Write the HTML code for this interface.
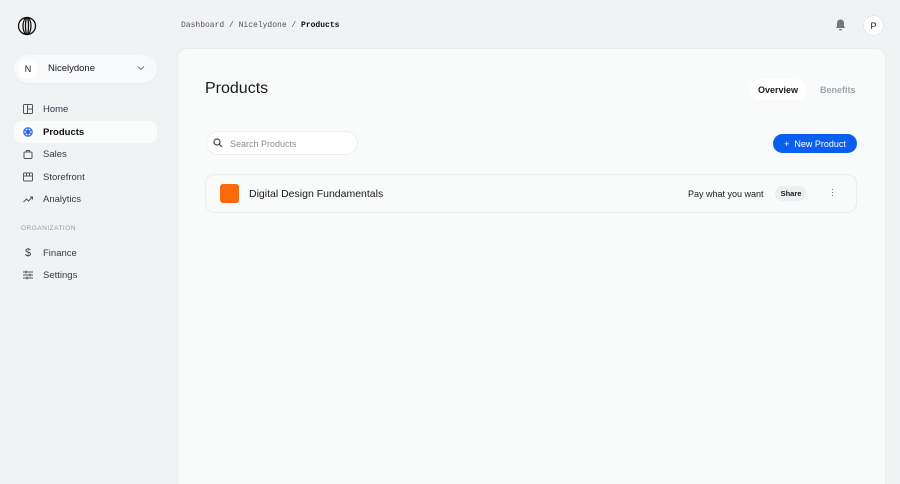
<!DOCTYPE html>
<html style="overflow:hidden;height:484px"><head><style>
*{margin:0;padding:0;box-sizing:border-box}
body{width:900px;height:484px;overflow:hidden;background:#f1f2f4;font-family:"Liberation Sans",sans-serif;position:relative;color:#1a1a1f}
.a{position:absolute}
.nav{left:14px;width:143px;height:22px;border-radius:8px;font-size:9.5px;color:#363946;display:flex;align-items:center;padding-left:9px}
.nav svg{margin-right:10px}
.nav.act{background:#fafbfb;color:#111;font-weight:bold}
</style></head><body>
<svg class="a" style="left:17px;top:16px" width="20" height="20" viewBox="0 0 20 20" fill="none" stroke="#111" stroke-width="1.3"><circle cx="10" cy="10" r="8.5"/><ellipse cx="10" cy="10" rx="4" ry="8.5"/><ellipse cx="10" cy="10" rx="1.5" ry="8.5"/></svg>
<div class="a" style="left:14px;top:55px;width:143px;height:28px;border-radius:14px;background:#f8f9fa;box-shadow:0 1px 2px rgba(0,0,0,.04)"></div>
<div class="a" style="left:18px;top:59px;width:20px;height:20px;border-radius:50%;background:#fff;font-size:9px;display:flex;align-items:center;justify-content:center">N</div>
<div class="a" style="left:48px;top:63px;font-size:9.5px">Nicelydone</div>
<svg class="a" style="left:137px;top:65px" width="8" height="6" viewBox="0 0 8 6" fill="none" stroke="#777" stroke-width="1"><path d="M1 1.5l3 3 3-3"/></svg>
<div class="a nav" style="top:98px"><svg width="10" height="10" viewBox="0 0 10 10" fill="none" stroke="#555" stroke-width="1"><rect x=".5" y=".5" width="9" height="9" rx="1"/><path d="M4.5 .5v9M4.5 5h5"/></svg>Home</div>
<div class="a nav act" style="top:121px"><svg width="10" height="10" viewBox="0 0 10 10" fill="none" stroke="#2563eb" stroke-width="1.2"><circle cx="5" cy="5" r="4.2"/><circle cx="5" cy="5" r="1.5"/><path d="M5 1v8M1.5 3l7 4M1.5 7l7-4"/></svg>Products</div>
<div class="a nav" style="top:143px"><svg width="10" height="10" viewBox="0 0 10 10" fill="none" stroke="#555" stroke-width="1"><rect x="1" y="3" width="8" height="6.5" rx="1"/><path d="M3.5 3V1.5h3V3"/></svg>Sales</div>
<div class="a nav" style="top:166px"><svg width="10" height="10" viewBox="0 0 10 10" fill="none" stroke="#555" stroke-width="1"><rect x=".5" y="1" width="9" height="8" rx="1"/><path d="M.5 4h9M3.5 1v3M6.5 1v3"/></svg>Storefront</div>
<div class="a nav" style="top:188px"><svg width="10" height="10" viewBox="0 0 10 10" fill="none" stroke="#555" stroke-width="1"><path d="M.5 8l3-3 2 2 4-4M7 3h2.5v2.5"/></svg>Analytics</div>
<div class="a" style="left:21px;top:225px;font-size:6.5px;color:#999;letter-spacing:.5px">ORGANIZATION</div>
<div class="a nav" style="top:242px"><span style="width:10px;margin-right:10px;font-size:11px;color:#444;text-align:center">$</span>Finance</div>
<div class="a nav" style="top:264px"><svg width="10" height="10" viewBox="0 0 10 10" fill="none" stroke="#555" stroke-width="1"><path d="M0 2h10M0 5h10M0 8h10M3 .5v3M7 3.5v3M4 6.5v3"/></svg>Settings</div>
<div class="a" style="left:181px;top:21px;font-family:'Liberation Mono',monospace;font-size:8px;color:#555">Dashboard / Nicelydone / <b style="color:#111">Products</b></div>
<svg class="a" style="left:835px;top:19px" width="11" height="12" viewBox="0 0 11 12" fill="#777"><path d="M5.5 .5c-2 0-3.5 1.5-3.5 3.5v3L1 9h9L9 7V4C9 2 7.5.5 5.5.5zM4 10a1.5 1.5 0 003 0z"/></svg>
<div class="a" style="left:863px;top:15px;width:21px;height:21px;border-radius:50%;background:#fff;border:1px solid #e6e7ea;font-size:9px;display:flex;align-items:center;justify-content:center">P</div>
<div class="a" style="left:177px;top:48px;width:709px;height:450px;border-radius:10px;background:#f9fafa;border:1px solid #ebecef"></div>
<div class="a" style="left:205px;top:80px;font-size:16px">Products</div>
<div class="a" style="left:750px;top:79px;width:56px;height:21px;border-radius:11px;background:#fff;font-size:9px;font-weight:bold;display:flex;align-items:center;justify-content:center">Overview</div>
<div class="a" style="left:820px;top:85px;font-size:9px;font-weight:bold;color:#a0a3ad">Benefits</div>
<div class="a" style="left:206px;top:131px;width:152px;height:24px;border-radius:12px;background:#fff;border:1px solid #eceef0"></div>
<svg class="a" style="left:213px;top:138px" width="10" height="10" viewBox="0 0 10 10" fill="none" stroke="#444" stroke-width="1.2"><circle cx="4" cy="4" r="3"/><path d="M6.3 6.3L9 9"/></svg>
<div class="a" style="left:230px;top:139px;font-size:9px;color:#8a8d96">Search Products</div>
<div class="a" style="left:773px;top:134px;width:84px;height:19px;border-radius:10px;background:#0b5ff0;color:#fff;font-size:9px;display:flex;align-items:center;justify-content:center">+&nbsp;&nbsp;New Product</div>
<div class="a" style="left:205px;top:174px;width:652px;height:39px;border-radius:10px;background:#f9fafa;border:1px solid #ebecef"></div>
<div class="a" style="left:220px;top:184px;width:19px;height:19px;border-radius:3px;background:#fa6a0a"></div>
<div class="a" style="left:249px;top:188px;font-size:10.5px">Digital Design Fundamentals</div>
<div class="a" style="left:688px;top:189px;font-size:9px">Pay what you want</div>
<div class="a" style="left:775px;top:186px;width:32px;height:15px;border-radius:8px;background:#eeeff1;font-size:7.5px;font-weight:bold;display:flex;align-items:center;justify-content:center">Share</div>
<div class="a" style="left:831px;top:188px;font-size:9px;color:#666;line-height:3px;width:2px">·<br>·<br>·</div>
</body></html>
